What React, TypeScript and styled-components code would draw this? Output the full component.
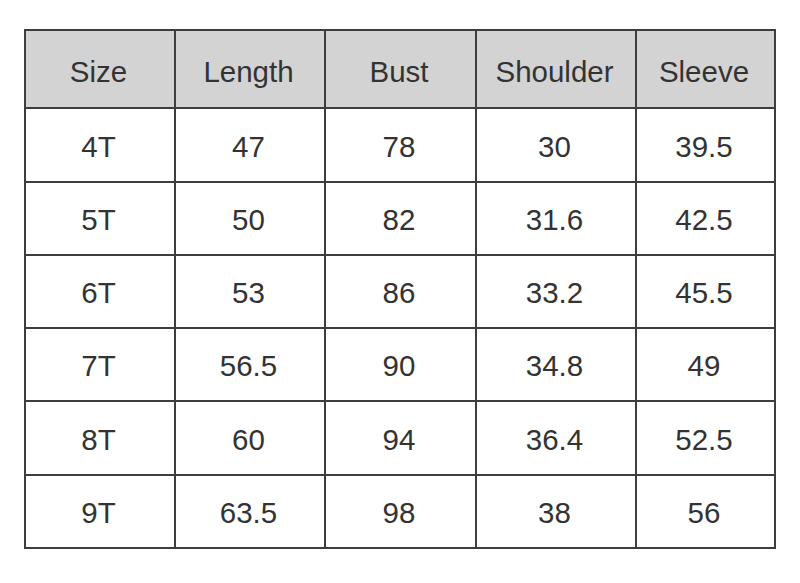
import styled, { createGlobalStyle } from "styled-components";

const GlobalStyle = createGlobalStyle`
  body {
    margin: 0;
    background: #ffffff;
  }
`;

const Page = styled.div`
  width: 800px;
  height: 583px;
  padding: 29px 0 0 24px;
  box-sizing: border-box;
  background: #ffffff;
`;

// the grid lines are the dark background showing through the gaps
const SizeGrid = styled.div`
  display: grid;
  grid-template-columns: 148px 148px 149px 158px 137px;
  grid-template-rows: 76px 72px 71px 71px 71px 72px 71px;
  gap: 2px;
  padding: 2px;
  width: max-content;
  background: #3d3d3d;
  font-family: "Liberation Sans", Arial, sans-serif;
  font-size: 29.5px;
  color: #333333;
`;

const Cell = styled.div<{ $head?: boolean }>`
  display: flex;
  align-items: center;
  justify-content: center;
  background: ${(p) => (p.$head ? "#d3d3d3" : "#ffffff")};
  padding-top: ${(p) => (p.$head ? "5px" : "3px")};
  padding-right: 3px;
  box-sizing: border-box;
`;

const headers = ["Size", "Length", "Bust", "Shoulder", "Sleeve"];

const rows = [
  ["4T", "47", "78", "30", "39.5"],
  ["5T", "50", "82", "31.6", "42.5"],
  ["6T", "53", "86", "33.2", "45.5"],
  ["7T", "56.5", "90", "34.8", "49"],
  ["8T", "60", "94", "36.4", "52.5"],
  ["9T", "63.5", "98", "38", "56"],
];

function App() {
  return (
    <>
      <GlobalStyle />
      <Page>
        <SizeGrid>
          {headers.map((h) => (
            <Cell $head key={h}>
              {h}
            </Cell>
          ))}
          {rows.map((row) =>
            row.map((val, i) => <Cell key={row[0] + i}>{val}</Cell>)
          )}
        </SizeGrid>
      </Page>
    </>
  );
}

export default App;
